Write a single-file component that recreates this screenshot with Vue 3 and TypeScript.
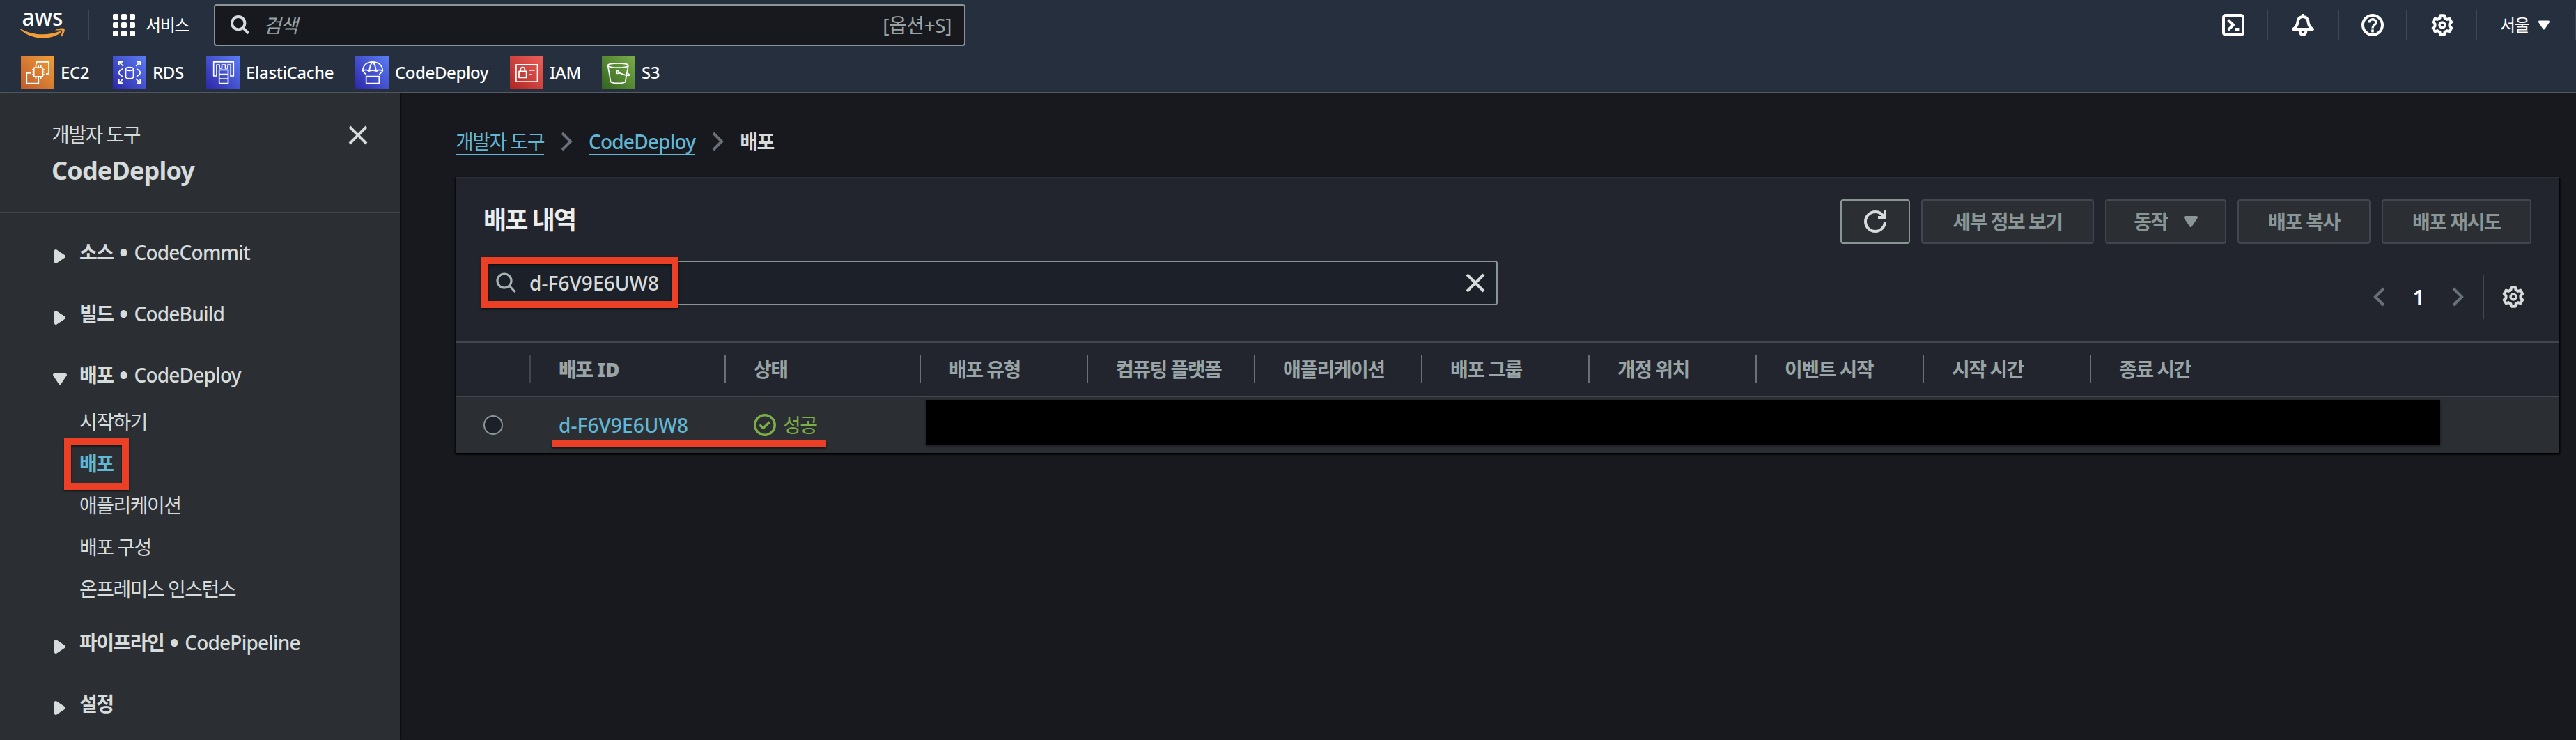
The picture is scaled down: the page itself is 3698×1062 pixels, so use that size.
<script setup lang="ts">
interface Favorite { id: string; label: string; width: number }
interface NavSection { label: string; service?: string; open?: boolean; items?: { label: string; active?: boolean }[] }

const favorites: Favorite[] = [
  { id: 'ec2', label: 'EC2', width: 132 },
  { id: 'rds', label: 'RDS', width: 134 },
  { id: 'cache', label: 'ElastiCache', width: 214 },
  { id: 'deploy', label: 'CodeDeploy', width: 222 },
  { id: 'iam', label: 'IAM', width: 132 },
  { id: 's3', label: 'S3', width: 90 },
]

const sections: NavSection[] = [
  { label: '소스', service: 'CodeCommit' },
  { label: '빌드', service: 'CodeBuild' },
  {
    label: '배포',
    service: 'CodeDeploy',
    open: true,
    items: [
      { label: '시작하기' },
      { label: '배포', active: true },
      { label: '애플리케이션' },
      { label: '배포 구성' },
      { label: '온프레미스 인스턴스' },
    ],
  },
  { label: '파이프라인', service: 'CodePipeline' },
  { label: '설정' },
]

const columns = ['상태', '배포 유형', '컴퓨팅 플랫폼', '애플리케이션', '배포 그룹', '개정 위치', '이벤트 시작', '시작 시간', '종료 시간']

// Six-toothed cog outline on a 16-unit grid.
function cogPath(): string {
  const pts: string[] = []
  for (let i = 0; i < 6; i++) {
    const mid = i * 60 - 90
    const steps: [number, number][] = [[-20, 5.3], [-12, 7], [12, 7], [20, 5.3]]
    for (const [offset, r] of steps) {
      const a = ((mid + offset) * Math.PI) / 180
      pts.push(`${(8 + r * Math.cos(a)).toFixed(2)} ${(8 + r * Math.sin(a)).toFixed(2)}`)
    }
  }
  return `M${pts.join('L')}Z`
}
const cog = cogPath()
</script>

<template>
  <div class="console">
    <header class="top">
      <div class="bar">
        <svg class="logo" viewBox="0 0 66 46">
          <text x="2.5" y="24.5" textLength="59" lengthAdjust="spacingAndGlyphs">aws</text>
          <path d="M1.2 29.4C19 39.5 41 39 56.8 32.7c2.200-.9 3.400.9 1.600 2.200C43.500 45.500 17.500 46 .7 31c-1-1-.4-2 .5-1.600z" />
          <path d="M50.500 31.300c5.500-3.600 12-3 13-1.700.9 1.300-.3 7.600-4.200 10.900-.8.600-1.500.2-1.200-.6 1-2.500 2.800-6.800 2.100-7.900-.9-1.100-6.200-.6-8.800-.300-1 .2-1.400-.100-.9-.400z" />
        </svg>
        <i class="rule rule-logo"></i>
        <svg class="apps" viewBox="0 0 32 32">
          <template v-for="r in 3" :key="r">
            <rect v-for="c in 3" :key="c" :x="(c - 1) * 12" :y="(r - 1) * 12" width="8" height="8" rx="1.8" />
          </template>
        </svg>
        <span class="ko services">서비스</span>
        <div class="search">
          <svg class="glass" viewBox="0 0 28 28"><circle cx="11.200" cy="11.200" r="9.200" /><path d="M17.800 17.800l8 8" /></svg>
          <span class="ko hint">검색</span>
          <span class="ko keys">[옵션+S]</span>
        </div>
        <div class="tools">
          <span class="tool"><svg class="ic" viewBox="0 0 16 16"><rect x="1" y="1" width="14" height="14" rx="1.500" /><path d="M4.300 4.300L8 7.900l-3.700 3.700M9.200 11h3" /></svg></span>
          <i class="rule"></i>
          <span class="tool wide"><svg class="ic" viewBox="0 0 16 16"><path d="M8 0v2M1 11c2.500-1.600 3-3.200 3.200-5C4.400 3.500 5.800 2 8 2s3.600 1.500 3.800 4c.2 1.800.7 3.400 3.200 5z" /><path d="M5.900 11.500v1.200a2.100 2.300 0 0 0 4.200 0v-1.200" /></svg></span>
          <i class="rule"></i>
          <span class="tool"><svg class="ic" viewBox="0 0 16 16"><circle cx="8" cy="8" r="7" /><path class="thin" d="M5.500 6.300c0-1.500 1.100-2.400 2.500-2.400s2.500.9 2.500 2.200c0 1.600-2.500 1.900-2.500 4.100" /><path d="M7.100 12.200h1.800" /></svg></span>
          <i class="rule"></i>
          <span class="tool mid"><svg class="ic" viewBox="0 0 16 16"><path :d="cog" /><circle class="thin" cx="8" cy="8" r="2" /></svg></span>
          <i class="rule"></i>
          <span class="region"><span class="ko">서울</span><svg class="caret" viewBox="0 0 16 16"><path d="M4 5h8l-4 6z" /></svg></span>
          <i class="rule"></i>
        </div>
      </div>
      <nav class="favorites">
        <a v-for="f in favorites" :key="f.id" class="fav" :style="{ width: f.width + 'px' }">
          <svg class="tile" :class="f.id" viewBox="0 0 48 48">
            <g v-if="f.id === 'ec2'">
              <rect x="18.700" y="17" width="12.800" height="12.800" rx="1" />
              <path d="M22.300 12.500V8.800H40v17h-4M15 24.800H8.300v14.700h17V34" />
              <path d="M21.500 17v-3M25.100 17v-3M28.700 17v-3M21.500 33v-3M25.100 33v-3M28.700 33v-3M18.500 20h-2.600M18.500 23.500h-2.600M18.500 27h-2.600M34.300 20h-2.600M34.300 23.500h-2.600M34.300 27h-2.600" />
            </g>
            <g v-else-if="f.id === 'rds'">
              <ellipse cx="24" cy="19" rx="5.500" ry="2.300" />
              <path d="M18.500 19v11.500c0 3 11 3 11 0V19" />
              <path d="M14 18.800c-7 3.500-7 7.500 0 11M34 18.800c7 3.500 7 7.500 0 11" />
              <path d="M8.800 14V8.800H14M8.800 8.800l6 6M34 8.800h5.200V14M39.200 8.800l-6 6M8.800 34v5.200H14M8.800 39.200l6-6M34 39.200h5.200V34M39.200 39.200l-6-6" />
            </g>
            <g v-else-if="f.id === 'cache'">
              <path d="M16 29h-5.300V8.800h28.600V29H34" />
              <path d="M15 29V13.200h4V18h3.500v-4.800h5V18H31v-4.800h4.200V29" />
              <path d="M18.700 20.300h12.800v19.200H18.700zM18.700 26.700h12.800M18.700 33.100h12.800" />
            </g>
            <g v-else-if="f.id === 'deploy'">
              <path d="M10.700 22C11 13.500 17 8.800 25 8.800S39 13.500 39.300 22l-5 5.200M10.700 22l5 5.200M15.700 29.500h18.600v10.100H15.700z" />
              <path d="M10.700 22c3-2 6-2 8.500 0 3.500-1 8-1 11.600 0 2.500-2 5.500-2 8.500 0M20.200 24c0-7 1.500-12 4.800-15M29.800 24c0-7-1.500-12-4.800-15" />
            </g>
            <g v-else-if="f.id === 'iam'">
              <path d="M8.900 12.900h30.600v24.200H8.900zM13 22.300h10.600v9H13zM15.200 22v-2.300c0-4.200 6.200-4.200 6.200 0V22M28 21h7.500M28 27.200h4" />
            </g>
            <g v-else>
              <ellipse cx="23.200" cy="14" rx="14.600" ry="3.200" />
              <path d="M8.600 14.200l4 22.600c.5 3.400 20.700 3.400 21.200 0l4-22.600" />
              <circle cx="22.700" cy="23.600" r="1.900" />
              <path d="M24.600 24.400c5 2.200 10 4.200 14 4 2-.3.500-2-2-3.400" />
            </g>
          </svg>
          <span>{{ f.label }}</span>
        </a>
      </nav>
    </header>

    <div class="body">
      <aside class="side">
        <div class="side-head">
          <div class="names">
            <span class="ko family">개발자 도구</span>
            <strong class="product">CodeDeploy</strong>
          </div>
          <svg class="ic close" viewBox="0 0 16 16"><path d="M2 2l12 12M14 2L2 14" /></svg>
        </div>
        <ul class="tree">
          <li v-for="s in sections" :key="s.label">
            <div class="section">
              <svg class="fold" :class="{ open: s.open }" viewBox="0 0 16 16"><path d="M4 5h8l-4 6z" /></svg>
              <b class="ko">{{ s.label }}</b>
              <template v-if="s.service"><span class="dot">•</span><span class="en">{{ s.service }}</span></template>
            </div>
            <ul v-if="s.items" class="sub">
              <li v-for="it in s.items" :key="it.label" class="ko" :class="{ active: it.active }">
                {{ it.label }}<i v-if="it.active" class="mark mark-nav"></i>
              </li>
            </ul>
          </li>
        </ul>
      </aside>

      <main class="main">
        <nav class="crumbs">
          <a class="ko">개발자 도구</a>
          <svg class="ic angle" viewBox="0 0 16 16"><path d="M5 2l6 6-6 6" /></svg>
          <a class="en">CodeDeploy</a>
          <svg class="ic angle" viewBox="0 0 16 16"><path d="M5 2l6 6-6 6" /></svg>
          <b class="ko">배포</b>
        </nav>

        <section class="panel">
          <div class="panel-top">
            <h2 class="ko">배포 내역</h2>
            <div class="actions">
              <button class="btn refresh"><svg class="ic" viewBox="0 0 16 16"><path d="M10 5h5V0M15 8a7 7 0 1 1-7-7 6.870 6.870 0 0 1 6.300 4" /></svg></button>
              <button class="btn ko details">세부 정보 보기</button>
              <button class="btn ko menu">동작<svg class="caret" viewBox="0 0 16 16"><path d="M4 5h8l-4 6z" /></svg></button>
              <button class="btn ko copy">배포 복사</button>
              <button class="btn ko retry">배포 재시도</button>
            </div>
          </div>
          <div class="filter-row">
            <div class="filter">
              <svg class="glass" viewBox="0 0 30 30"><circle cx="12" cy="12" r="10" /><path d="M19 19l8.600 9" /></svg>
              <span class="id">d-F6V9E6UW8</span>
              <svg class="ic clear" viewBox="0 0 16 16"><path d="M2 2l12 12M14 2L2 14" /></svg>
              <i class="mark mark-filter"></i>
            </div>
            <div class="pager">
              <svg class="ic angle" viewBox="0 0 16 16"><path d="M11 2L5 8l6 6" /></svg>
              <b class="page">1</b>
              <svg class="ic angle" viewBox="0 0 16 16"><path d="M5 2l6 6-6 6" /></svg>
              <i class="pager-rule"></i>
              <svg class="ic gear" viewBox="0 0 16 16"><path :d="cog" /><circle class="thin" cx="8" cy="8" r="2" /></svg>
            </div>
          </div>
          <div class="grid head">
            <span></span>
            <span class="cell first"><b class="ko">배포</b>&nbsp;<b>ID</b></span>
            <span v-for="c in columns" :key="c" class="cell ko">{{ c }}</span>
          </div>
          <div class="grid row">
            <span class="pick"><i class="radio"></i></span>
            <span class="cell link id">d-F6V9E6UW8</span>
            <span class="cell status">
              <svg viewBox="0 0 32 32"><circle cx="16" cy="16" r="14.200" /><path d="M8.500 15.500l5 5 9.500-9" /></svg>
              <span class="ko">성공</span>
            </span>
            <i class="stroke"></i>
            <i class="redact"></i>
          </div>
        </section>
      </main>
    </div>
  </div>
</template>

<style>
body { background: #18191e; }
</style>

<style scoped>
.console { width: 3698px; height: 1062px; overflow: hidden; display: flex; flex-direction: column; background: #18191e; color: #d6dbdb; font-family: "Noto Sans", "Noto Sans CJK KR", sans-serif; font-size: 28px; line-height: 40px; white-space: nowrap; }
.console *, .console { box-sizing: border-box; }
svg { display: block; flex: none; }
.ko { letter-spacing: -0.054em; }
.en { font-weight: 500; letter-spacing: -0.8px; }
.id { font-weight: 500; letter-spacing: 0.1px; }
.ic { width: 32px; height: 32px; fill: none; stroke: currentColor; stroke-width: 2; stroke-linejoin: round; }
.ic .thin { stroke-width: 1.7; }
.caret { width: 32px; height: 32px; fill: currentColor; stroke: currentColor; stroke-width: 2; stroke-linejoin: round; }
.glass { fill: none; stroke: currentColor; }

.top { flex: none; height: 134px; background: #262f3d; border-bottom: 2px solid #555b64; color: #fff; font-size: 24px; }
.bar { height: 72px; display: flex; align-items: center; padding-left: 29px; }
.logo { width: 66px; height: 46px; margin-top: -2px; fill: #f19e38; overflow: visible; }
.logo text { fill: #fff; font-size: 34px; font-weight: 500; }
.rule { flex: none; width: 2px; height: 44px; background: #42474f; }
.rule-logo { margin: 0 34px 0 31px; }
.apps { width: 32px; height: 32px; fill: #fff; }
.services { width: 98px; padding-left: 15px; }
.search { width: 1079px; height: 60px; margin-left: 15px; display: flex; align-items: center; border: 2px solid #8a9596; border-radius: 4px; background: #18191e; padding: 0 20px 0 22px; font-size: 28px; color: #98a4a5; }
.search .glass { width: 28px; height: 28px; stroke-width: 4; color: #d6dbdb; }
.hint { margin-left: 19px; font-style: italic; }
.keys { margin-left: auto; margin-right: -2px; letter-spacing: -0.015em; }
.tools { margin-left: auto; display: flex; align-items: center; }
.tool { width: 96px; display: flex; justify-content: center; }
.tool.wide { width: 100px; }
.tool.mid { width: 98px; padding-left: 2px; }
.region { width: 140px; display: flex; align-items: center; padding-left: 33px; }
.region .caret { width: 26px; height: 26px; margin-left: 8px; }

.favorites { display: flex; padding: 8px 0 0 30px; }
.fav { display: flex; align-items: center; gap: 9px; font-weight: 500; letter-spacing: -0.4px; }
.tile { width: 48px; height: 48px; fill: none; stroke: #fff; stroke-width: 1.7; stroke-linejoin: round; }
.ec2 { background: linear-gradient(45deg, #bf5b2d, #f19e38); }
.rds, .cache, .deploy { background: linear-gradient(45deg, #2d27a8, #5b7df5); }
.iam { background: linear-gradient(45deg, #ae2622, #ee605a); }
.s3 { background: linear-gradient(45deg, #31641e, #7bad4b); }

.body { flex: 1; display: flex; min-height: 0; }
.side { position: relative; flex: none; width: 574px; background: #2b2e33; box-shadow: 1px 0 2px rgba(0, 0, 0, .7); }
.side-head { height: 172px; border-bottom: 2px solid #42474f; padding: 39px 44px 0 74px; display: flex; justify-content: space-between; align-items: flex-start; }
.names { display: flex; flex-direction: column; }
.product { font-size: 36px; line-height: 63px; letter-spacing: -0.85px; }
.close { margin-top: 5px; }
ul { list-style: none; margin: 0; padding: 0; }
.tree { padding-top: 12px; }
.section { height: 88px; display: flex; align-items: center; padding-left: 70px; }
.fold { width: 32px; height: 32px; margin: 12px 12px 0 0; fill: currentColor; stroke: currentColor; stroke-width: 2; stroke-linejoin: round; transform: rotate(-90deg); }
.fold.open { transform: none; }
.dot { width: 30px; text-align: center; font-size: 44px; }
.sub { margin: -7px 0 3px; padding-left: 114px; }
.sub li { position: relative; height: 60px; line-height: 60px; }
.sub .active { color: #61b7d4; font-weight: 700; }

.mark { position: absolute; border: 10px solid #eb4026; box-shadow: 0 2px 3px rgba(0, 0, 0, .5), inset 0 2px 3px rgba(0, 0, 0, .5); }
.mark-nav { left: -22px; top: -6px; width: 93px; height: 74px; }
.mark-filter { left: -5px; top: -7px; width: 283px; height: 73px; }

.main { flex: 1; padding: 49px 24px 0 80px; }
.crumbs { height: 71px; display: flex; align-items: flex-start; gap: 16px; }
.crumbs a { height: 40px; color: #61b7d4; border-bottom: 2px solid #61b7d4; }
.crumbs .ic { margin-top: 4px; }
.angle { color: #697078; stroke-linejoin: miter; }

.panel { height: 396px; background: #22252d; border-top: 2px solid #2e3035; box-shadow: 0 2px 2px #000, 2px 2px 2px rgba(0, 0, 0, .6), -1px 1px 2px rgba(0, 0, 0, .5); }
.panel-top { height: 118px; padding: 30px 40px 0; display: flex; justify-content: space-between; }
h2 { margin: 0; font-size: 36px; line-height: 60px; font-weight: 700; color: #ebeded; }
.actions { display: flex; gap: 16px; }
.btn { height: 64px; display: flex; align-items: center; justify-content: center; padding: 0; border: 2px solid #42474f; border-radius: 4px; background: #2b2e33; color: #8a9596; font-family: inherit; font-size: 28px; font-weight: 700; line-height: 40px; }
.refresh { width: 100px; border-color: #8a9596; color: #d6dbdb; }
.refresh .ic { stroke-linejoin: miter; }
.details { width: 248px; }
.menu { width: 174px; }
.menu .caret { margin: 0 -6px 0 17px; }
.copy { width: 191px; }
.retry { width: 215px; }
.filter-row { height: 118px; border-bottom: 2px solid #42474f; padding: 0 50px 0 40px; display: flex; align-items: flex-start; justify-content: space-between; }
.filter { position: relative; width: 1456px; height: 64px; display: flex; align-items: center; border: 2px solid #8a9596; border-radius: 4px; background: #1c2028; padding: 0 14px 0 16px; }
.filter .glass { width: 30px; height: 30px; stroke-width: 3.2; color: #a9b3b3; margin-right: 18px; }
.clear { margin-left: auto; }
.pager { height: 64px; margin-top: 20px; display: flex; align-items: center; }
.page { width: 80px; text-align: center; color: #fff; }
.pager-rule { width: 2px; height: 64px; background: #42474f; margin: 0 26px 0 20px; }

.grid { display: grid; grid-template-columns: 106px 280px 280px repeat(8, 240px); align-items: center; }
.head { height: 78px; border-bottom: 2px solid #42474f; color: #98a4a5; font-weight: 700; }
.cell { display: flex; align-items: center; padding-left: 42px; }
.head .cell { border-left: 2px solid #697078; padding-left: 40px; height: 40px; }
.head .first { border-color: #42474f; letter-spacing: -0.5px; }
.row { position: relative; height: 80px; background: #2b2e33; }
.pick { padding-left: 40px; }
.radio { display: block; width: 28px; height: 28px; border: 2px solid #8a9596; border-radius: 50%; background: #1c2028; }
.link { color: #61b7d4; }
.status { color: #7bae46; gap: 10px; }
.status svg { width: 32px; height: 32px; fill: none; stroke: currentColor; stroke-width: 3.6; }
.stroke { position: absolute; left: 138px; top: 62px; width: 394px; height: 10px; background: #eb4026; box-shadow: 0 2px 3px rgba(0, 0, 0, .5); }
.redact { position: absolute; left: 675px; top: 4px; width: 2174px; height: 64px; background: #000; box-shadow: 0 2px 3px rgba(0, 0, 0, .5); }
</style>
